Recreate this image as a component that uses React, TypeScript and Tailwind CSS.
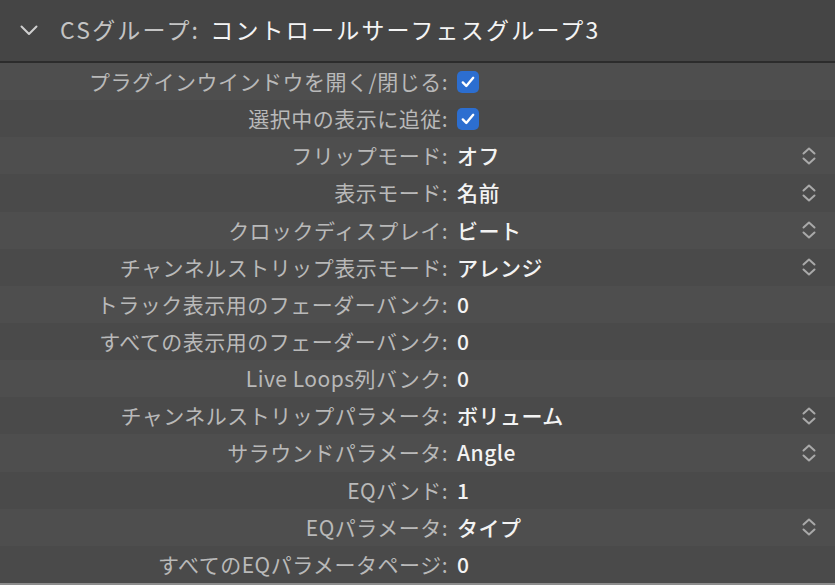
import React from 'react';

type Row = {
  label: string;
  value?: string;
  checked?: boolean;
  popup?: boolean;
};

const rows: Row[] = [
  { label: 'プラグインウインドウを開く/閉じる:', checked: true },
  { label: '選択中の表示に追従:', checked: true },
  { label: 'フリップモード:', value: 'オフ', popup: true },
  { label: '表示モード:', value: '名前', popup: true },
  { label: 'クロックディスプレイ:', value: 'ビート', popup: true },
  { label: 'チャンネルストリップ表示モード:', value: 'アレンジ', popup: true },
  { label: 'トラック表示用のフェーダーバンク:', value: '0' },
  { label: 'すべての表示用のフェーダーバンク:', value: '0' },
  { label: 'Live Loops列バンク:', value: '0' },
  { label: 'チャンネルストリップパラメータ:', value: 'ボリューム', popup: true },
  { label: 'サラウンドパラメータ:', value: 'Angle', popup: true },
  { label: 'EQバンド:', value: '1' },
  { label: 'EQパラメータ:', value: 'タイプ', popup: true },
  { label: 'すべてのEQパラメータページ:', value: '0' },
];

const font = { fontFamily: '"Noto Sans CJK JP", "Noto Sans", sans-serif' };

const Checkbox = () => (
  <div className="w-[22px] h-[22px] rounded-[5px] bg-[#2c6ed0] flex items-center justify-center">
    <svg width="14" height="12" viewBox="0 0 14 12" fill="none">
      <path d="M1.8 6.4 L5.3 10 L12.2 1.8" stroke="#fff" strokeWidth="2.4" strokeLinecap="round" strokeLinejoin="round" />
    </svg>
  </div>
);

const Stepper = () => (
  <svg width="16" height="20" viewBox="0 0 16 20" fill="none">
    <path d="M2.5 7.5 L8 2.5 L13.5 7.5" stroke="#a9a9a9" strokeWidth="2" strokeLinecap="round" strokeLinejoin="round" />
    <path d="M2.5 12.5 L8 17.5 L13.5 12.5" stroke="#a9a9a9" strokeWidth="2" strokeLinecap="round" strokeLinejoin="round" />
  </svg>
);

export default function App() {
  return (
    <div className="w-[835px] h-[585px] overflow-hidden bg-[#4b4b4b] flex flex-col" style={font}>
      {/* group header */}
      <div className="h-[61px] shrink-0 bg-[#454545] flex items-center pl-[20px]">
        <svg width="18" height="11" viewBox="0 0 18 11" fill="none">
          <path d="M1.5 1.5 L9 9 L16.5 1.5" stroke="#cfcfcf" strokeWidth="2" strokeLinecap="round" strokeLinejoin="round" />
        </svg>
        <div className="ml-[22px] -mt-[2px] text-[23px] tracking-[2.2px] leading-none">
          <span className="text-[#c4c4c4]">CSグループ:</span>
          <span className="text-[#f4f4f4] ml-[10px]">コントロールサーフェスグループ3</span>
        </div>
      </div>
      <div className="h-[2px] shrink-0 bg-[#2c2c2c]" />

      {/* settings list */}
      <div className="flex-1 flex flex-col border-b-[2px] border-[#8c8c8c]">
        {rows.map((row, i) => (
          <div
            key={row.label}
            className={`flex-1 flex items-center ${i % 2 === 0 ? 'bg-[#4e4e4e]' : 'bg-[#4a4a4a]'}`}
          >
            <div className="w-[448px] shrink-0 text-right text-[21px] tracking-[0.5px] leading-none text-[#b9b9b9] whitespace-nowrap">
              {row.label}
            </div>
            <div className="flex-1 flex items-center pl-[9px]">
              {row.checked && <Checkbox />}
              {row.value && (
                <span className="text-[21px] tracking-[0.5px] leading-none text-[#f3f3f3] font-medium whitespace-nowrap">{row.value}</span>
              )}
            </div>
            {row.popup && (
              <div className="w-[16px] mr-[18px] flex items-center">
                <Stepper />
              </div>
            )}
          </div>
        ))}
      </div>
    </div>
  );
}
